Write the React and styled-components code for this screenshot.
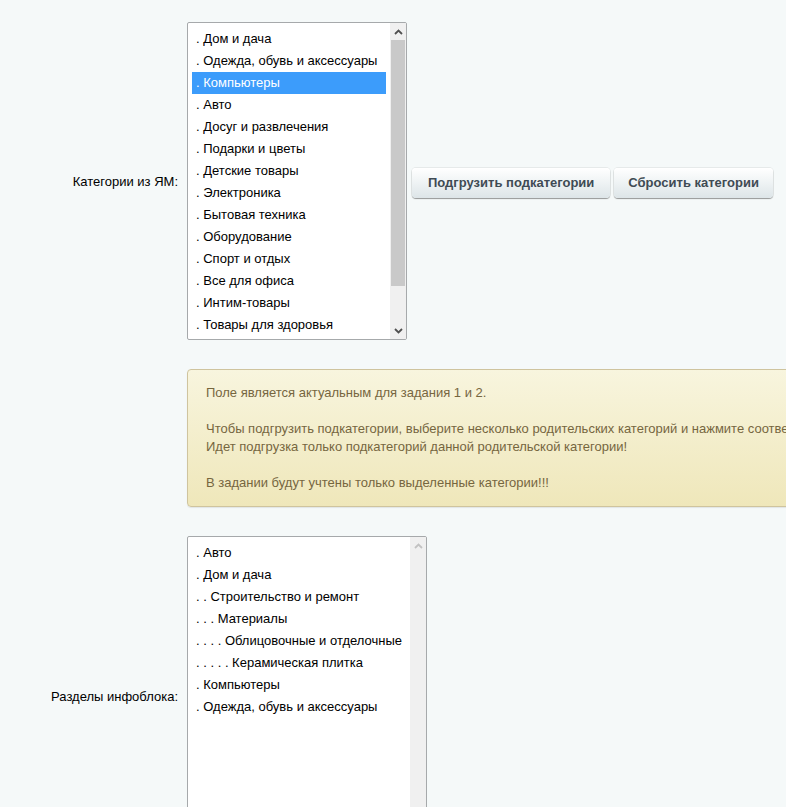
import React from "react";
import styled, { createGlobalStyle } from "styled-components";

const Global = createGlobalStyle`
  html, body { margin: 0; padding: 0; }
  body {
    background: #f5f9f9;
    font-family: Arial, "Liberation Sans", Helvetica, sans-serif;
    font-size: 13px;
    color: #000;
    overflow: hidden;
  }
`;

const Form = styled.div`
  padding-top: 22px;
  display: flex;
  flex-direction: column;
  gap: 29px;
  width: 900px;
`;

const Row = styled.div`
  display: grid;
  grid-template-columns: 178px auto;
  column-gap: 9px;
  align-items: center;
  justify-content: start;
`;

const Label = styled.div`
  text-align: right;
  font-size: 13px;
  color: #000;
`;

const Field = styled.div`
  display: flex;
  align-items: center;
  gap: 5px;
`;

const ListBox = styled.div`
  box-sizing: border-box;
  width: ${(p) => p.$w}px;
  height: ${(p) => p.$h}px;
  background: #fff;
  border: 1px solid #a6a9ab;
  border-radius: 2px;
  display: flex;
  overflow: hidden;
`;

const Items = styled.div`
  flex: 1;
  padding: 5px 4px 4px 4px;
  display: flex;
  flex-direction: column;
  overflow: hidden;
`;

const Item = styled.div`
  height: 22px;
  line-height: 22px;
  padding-left: 4px;
  white-space: nowrap;
  color: ${(p) => (p.$sel ? "#fff" : "#000")};
  background: ${(p) => (p.$sel ? "#3c9cfb" : "transparent")};
  flex-shrink: 0;
`;

const Scrollbar = styled.div`
  width: 16px;
  background: #f0f0f0;
  display: flex;
  flex-direction: column;
  flex-shrink: 0;
`;

const Arrow = styled.div`
  height: 17px;
  display: flex;
  align-items: center;
  justify-content: center;
  flex-shrink: 0;
`;

const Thumb = styled.div`
  margin: 0 1px;
  height: ${(p) => p.$h}px;
  background: #c9c9c9;
`;

const Spacer = styled.div`
  flex: 1;
`;

const Buttons = styled.div`
  display: flex;
  gap: 4px;
  margin-top: 3px;
`;

const Button = styled.button`
  height: 30px;
  padding: 0 ${(p) => p.$px}px;
  border: none;
  border-radius: 4px;
  background: linear-gradient(to bottom, #ffffff 0%, #f0f4f5 45%, #dde5e8 100%);
  box-shadow: 0 1px 1px rgba(0, 0, 0, 0.35), inset 0 1px 0 #fff, 0 0 0 1px rgba(0,0,0,0.06);
  font-family: Arial, "Liberation Sans", Helvetica, sans-serif;
  font-weight: bold;
  font-size: 13px;
  color: #3f4b54;
  cursor: pointer;
`;

const Note = styled.div`
  box-sizing: border-box;
  width: 700px;
  padding: 14px 18px;
  border: 1px solid #cfc49e;
  border-radius: 4px;
  background: linear-gradient(to bottom, #f8f5de 0%, #efe7ba 100%);
  color: #76663f;
  font-size: 13px;
  line-height: 18px;
  white-space: nowrap;
  box-shadow: 0 1px 1px rgba(0,0,0,0.08);
`;

const Chevron = ({ up, color }) => (
  <svg width="9" height="6" viewBox="0 0 9 6">
    <path
      d={up ? "M1 5 L4.5 1.5 L8 5" : "M1 1 L4.5 4.5 L8 1"}
      fill="none"
      stroke={color}
      strokeWidth="1.8"
    />
  </svg>
);

const cats = [
  ". Дом и дача",
  ". Одежда, обувь и аксессуары",
  ". Компьютеры",
  ". Авто",
  ". Досуг и развлечения",
  ". Подарки и цветы",
  ". Детские товары",
  ". Электроника",
  ". Бытовая техника",
  ". Оборудование",
  ". Спорт и отдых",
  ". Все для офиса",
  ". Интим-товары",
  ". Товары для здоровья",
];

const sections = [
  ". Авто",
  ". Дом и дача",
  ". . Строительство и ремонт",
  ". . . Материалы",
  ". . . . Облицовочные и отделочные",
  ". . . . . Керамическая плитка",
  ". Компьютеры",
  ". Одежда, обувь и аксессуары",
];

export default function App() {
  return (
    <>
      <Global />
      <Form>
        <Row>
          <Label>Категории из ЯМ:</Label>
          <Field>
            <ListBox $w={220} $h={318}>
              <Items>
                {cats.map((c, i) => (
                  <Item key={i} $sel={i === 2}>
                    {c}
                  </Item>
                ))}
              </Items>
              <Scrollbar>
                <Arrow>
                  <Chevron up color="#505050" />
                </Arrow>
                <Thumb $h={246} />
                <Spacer />
                <Arrow>
                  <Chevron color="#505050" />
                </Arrow>
              </Scrollbar>
            </ListBox>
            <Buttons>
              <Button $px={16}>Подгрузить подкатегории</Button>
              <Button $px={14}>Сбросить категории</Button>
            </Buttons>
          </Field>
        </Row>
        <Row>
          <Label />
          <Note>
            Поле является актуальным для задания 1 и 2.
            <br />
            <br />
            Чтобы подгрузить подкатегории, выберите несколько родительских категорий и нажмите соответствующую кнопку.
            <br />
            Идет подгрузка только подкатегорий данной родительской категории!
            <br />
            <br />
            В задании будут учтены только выделенные категории!!!
          </Note>
        </Row>
        <Row>
          <Label>Разделы инфоблока:</Label>
          <Field>
            <ListBox $w={240} $h={320}>
              <Items>
                {sections.map((c, i) => (
                  <Item key={i}>{c}</Item>
                ))}
              </Items>
              <Scrollbar>
                <Arrow>
                  <Chevron up color="#c2c2c2" />
                </Arrow>
                <Spacer />
                <Arrow>
                  <Chevron color="#c2c2c2" />
                </Arrow>
              </Scrollbar>
            </ListBox>
          </Field>
        </Row>
      </Form>
    </>
  );
}
